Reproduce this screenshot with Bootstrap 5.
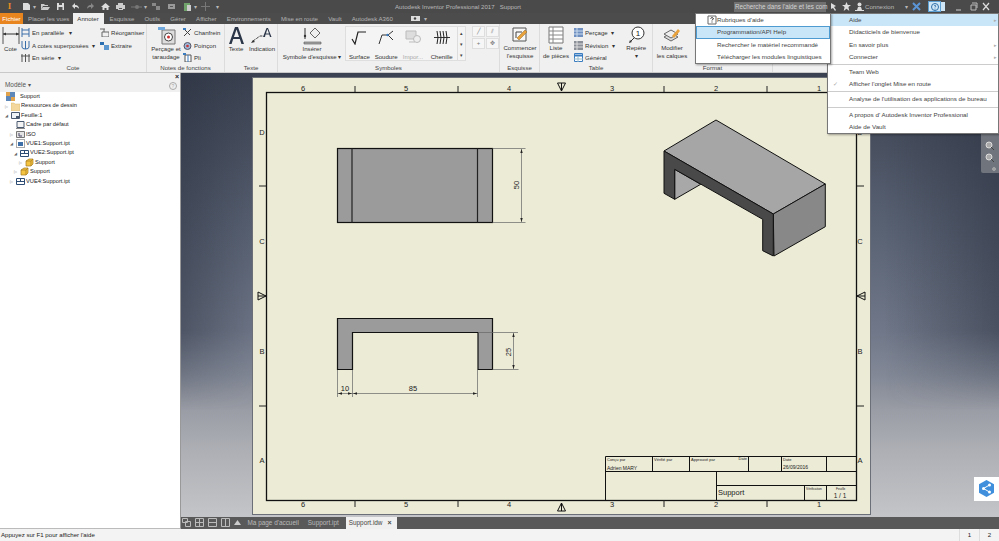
<!DOCTYPE html>
<html lang="fr">
<head>
<meta charset="UTF-8" />
<title>Autodesk Inventor Professional 2017 - Support</title>
<link href="https://cdn.jsdelivr.net/npm/bootstrap@5.3.2/dist/css/bootstrap.min.css" rel="stylesheet">
<style>
html,body{margin:0;height:541px;overflow:hidden;background:#4a4a4a}
body,.inv-app{font-family:"Liberation Sans",Arial,sans-serif;font-size:6.1px;line-height:1.2;color:#333}
.inv-app{width:999px;height:541px;overflow:hidden;position:relative}
svg{display:block;flex:none}
/* title + tabs */
.title-bar{height:13px;background:#4a4a4a;color:#b9b9b9}
.qat{width:395px;padding-left:4px}
.logo-i{width:11px;height:12px;color:#e98b24;font:bold 9px/10px "Liberation Serif",serif;text-align:center;margin-right:7px}
.qat svg{margin-right:2px}
.search-box{width:92px;height:10px;background:#707070;color:#d4d4d4;line-height:10px;padding-left:1px;white-space:nowrap;font-size:6.300px}
.right-tools{width:265px}
.conn-label{margin-left:1px;margin-right:11px}
.help-btn{width:13px;height:11px;background:#cfe6f7;border:1px solid #5d9fd0;margin-left:7px;margin-right:14px;box-shadow:5px 0 0 -1px #cfe6f7}
.tab-bar{height:11px;background:#4c4c4c;color:#b4b4b4;line-height:11px}
.tab-file{width:23px;background:#e9851f;color:#fff;text-align:center}
.tab-item{padding:0 5.100px;white-space:nowrap}
.tab-tight{margin-right:-3px}
.tab-on{background:#f0f0f0;color:#333;padding:0;margin:0 1px;width:31px;text-align:center}
/* ribbon */
.ribbon{height:49px;background:#f0f0f0;border-bottom:1px solid #c9c9c9}
.rib-group{border-right:1px solid #dcdcdc;height:48px}
.rib-body{height:39px;padding-top:2px}
.rib-label{height:9px;line-height:9px;text-align:center;color:#444}
.w-cote{width:147px}.w-notes{width:78px}.w-texte{width:53px}.w-symb{width:222px}.w-esq{width:40px}.w-table{width:113px}.w-format{width:120px}
.big-btn{text-align:center;line-height:8.400px;white-space:nowrap}
.big-btn svg{margin:0 auto}
.bw-cote{width:21px}.bw-perc{width:34px;margin-left:2px}.bw-txt{width:23px}.bw-ind{width:31px}.bw-ins{width:60px;margin-left:4px}.bw-com{width:40px}.bw-lst{width:28px;margin-left:2px}.bw-rep{width:31px;margin-left:6px}.bw-mod{width:34px;margin-left:2px}
.small-col{margin-top:2px;gap:3.600px;white-space:nowrap}
.small-row{height:9px;line-height:9px;gap:2px}
.col-a{width:79px}
.col-c{width:44px}
.gallery{width:121px;height:35px;margin-left:3px;border:1px solid #dedede;background:#f4f4f4}
.gal-btn{width:27px;text-align:center;line-height:8px;padding-top:3px;white-space:nowrap}
.gal-btn svg{margin:0 auto 8px}
.gal-last{width:31px}
.gal-off{color:#a9a9a9}
.gal-scroll{width:8px;border-left:1px solid #ddd;color:#444;font-size:5px;text-align:center;justify-content:space-around}
.mini-grid{display:grid;grid-template-columns:13px 13px;gap:1px;margin-left:6px;align-content:start}
.mini-grid span{height:11px;border:1px solid #dedede;background:#f6f6f6;color:#777;font-size:6px;line-height:9px;text-align:center}
/* main */
.model-pane{width:181px;background:#fff;border-right:1px solid #999;border-bottom:1px solid #bbb}
.model-head{height:19px;background:#f0f0f0;color:#555;position:relative;padding:8px 0 0 5px;font-size:6.400px}
.close-x{position:absolute;right:1px;top:0;font-size:7px;font-weight:bold;line-height:8px;color:#222}
.help-dot{position:absolute;right:3px;top:9px;width:8px;height:8px;border:1px solid #aaa;border-radius:50%;font-size:5px;line-height:6px;text-align:center;color:#aaa}
.tree-row{height:9.400px;line-height:9.400px;white-space:nowrap;color:#222;font-size:5.700px}
.t5{padding-left:5px}.t6{padding-left:6px}.t10{padding-left:10px}.t14{padding-left:14px}.t19{padding-left:19px}
.t-arrow{width:6px;font-size:4px;color:#666;flex:none;line-height:9px}
.tree-row svg{margin-right:1px}
.canvas-wrap{width:818px}
.canvas-area{height:444px;padding:4px 0 0 71px;position:relative;background:linear-gradient(180deg,#3a4150 0,#596273 35%,#6f7788 58%,#828896 68%,#9a9da5 76%,#adafb5 85%,#c4c5c8 100%)}
.canvas-area::before{content:"";position:absolute;inset:0;background:linear-gradient(90deg,rgba(38,44,58,.45) 0,rgba(38,44,58,0) 10%,rgba(38,44,58,0) 86%,rgba(38,44,58,.5) 100%);-webkit-mask-image:linear-gradient(180deg,#000 0,#000 58%,transparent 76%);mask-image:linear-gradient(180deg,#000 0,#000 58%,transparent 76%)}
.sheet-svg{position:relative}
.sheet-svg text{font-family:"Liberation Sans",Arial,sans-serif;fill:#222}
.nav-strip{position:absolute;right:0;top:40px;width:18px;height:60px;background:#70747c;border-radius:2px 0 0 2px}
.nav-strip svg{position:absolute;left:4px}
.nav-a{top:28px}.nav-b{top:40px}.nav-c{top:54px;left:11px!important}
.share-box{position:absolute;right:0;top:404px;width:25px;height:24px;background:#fff;padding:3px 5px}
.doc-tabs{height:12px;background:#595959;color:#b9b9b9;line-height:12px;font-size:6.400px}
.view-btns{gap:4px;padding:1px 0 0 1px;width:62px}
.doc-tab{padding:0 4.500px;white-space:nowrap}
.doc-on{background:#f0f0f0;color:#444;padding:0 3px;margin-left:2.500px;width:51px}
.doc-on b{margin-left:5px;font-size:7px}
.status-line{height:12px;background:#f3f3f3;line-height:12px;color:#222;padding-left:1px}
.status-cell{width:20px;text-align:center;border-left:1px solid #ddd;height:12px}
/* menus */
.dropdown-menu.help-menu{position:absolute;display:block;min-width:0;padding:0;margin:0;border-radius:0;border:1px solid #777;background:#fff;font-size:6.250px;box-shadow:1px 1px 2px rgba(0,0,0,.35)}
.menu-left{left:695px;top:13px;width:136px;z-index:20}
.menu-right{left:827px;top:13px;width:172px;z-index:19}
.help-menu .dropdown-item{height:12.300px;line-height:12px;padding:0 0 0 21px;color:#444;display:flex;align-items:center;position:relative;white-space:nowrap}
.help-menu .item-hot{background:#c9e6f8;box-shadow:inset 0 0 0 1px #4d9bd1}
.menu-right .item-hot{box-shadow:none}
.help-menu .dropdown-divider{margin:.9px 0;border-color:#ccc;opacity:1}
.sub-arrow{position:absolute;right:1px;color:#aaa;font-size:5px}
.item-check{position:absolute;left:5px;color:#aaa}
.menu-ico{position:absolute;left:11px;top:1px}
</style>
</head>
<body>
<div class="inv-app d-flex flex-column">

<div class="title-bar d-flex align-items-center">
  <div class="qat d-flex align-items-center">
    <div class="logo-i">I</div>
    <svg width="9" height="9" viewBox="0 0 9 9"><path d="M1 1h5l2 2v5H1z" fill="#ddd"/></svg><span class="me-1">▾</span>
    <svg width="10" height="9" viewBox="0 0 10 9"><path d="M1 2h3l1 1h3v1H3L1 8zM3 5h7L8 8H1z" fill="#ccc"/></svg>
    <svg class="ms-1" width="9" height="9" viewBox="0 0 9 9"><path d="M1 1h7v7H1z" fill="#ddd"/><path d="M3 1h3v2H3zM2.500 5h4v3h-4z" fill="#555"/></svg>
    <svg class="ms-1" width="9" height="9" viewBox="0 0 9 9"><path d="M1 4l3-3v2c3 0 4 2 4 4-1-1.500-2-2-4-2v2z" fill="#ddd"/></svg>
    <svg class="ms-1" width="9" height="9" viewBox="0 0 9 9"><path d="M8 4L5 1v2C2 3 1 5 1 7c1-1.500 2-2 4-2v2z" fill="#888"/></svg>
    <svg class="ms-1" width="9" height="9" viewBox="0 0 9 9"><path d="M4.500 1L0 5h1.500v3h2V6h2v2h2V5H9z" fill="#ddd"/></svg>
    <svg class="ms-1" width="9" height="9" viewBox="0 0 9 9"><path d="M2 1h5v2h2v4H7v1H2V7H0V3h2z" fill="#ccc"/><path d="M3 6h3v1H3z" fill="#555"/></svg>
    <svg class="ms-1" width="11" height="9" viewBox="0 0 11 9"><circle cx="6" cy="5" r="2" fill="#777"/><path d="M0 5h11" stroke="#777"/></svg><span class="me-1">▾</span>
    <svg width="10" height="9" viewBox="0 0 10 9"><path d="M1 1h4v3H1zM5 4h4v4H5z" fill="#888"/></svg>
    <svg class="ms-1" width="10" height="9" viewBox="0 0 10 9"><path d="M1 2h7v5H1z" fill="#999"/><path d="M3 4h3v1H3z" fill="#555"/></svg>
    <svg class="ms-1" width="9" height="10" viewBox="0 0 9 10"><path d="M1 1h6v8H1z" fill="#6fa36b"/><path d="M4 3h4v6H4z" fill="#ccc"/></svg><span class="me-1">▾</span>
    <svg width="9" height="9" viewBox="0 0 9 9"><path d="M4.500 0v9M0 4.500h9" stroke="#777"/></svg>
    <span class="ms-1">▾</span>
  </div>
  <div>Autodesk Inventor Professional 2017 &nbsp;&nbsp;Support</div>
  <div class="right-tools ms-auto d-flex align-items-center">
    <div class="search-box">Recherche dans l'aide et les com</div>
    <svg class="ms-1" width="8" height="9" viewBox="0 0 8 9"><path d="M1 1l5 3-2 1 2 3-1 1-2-3-2 1z" fill="#ddd"/></svg>
    <svg class="ms-1" width="9" height="9" viewBox="0 0 9 9"><path d="M4.500 0l1.300 3H9L6.400 5.100 7.300 9 4.500 6.800 1.700 9l.9-3.900L0 3h3.200z" fill="#ddd"/></svg>
    <svg class="ms-1" width="9" height="9" viewBox="0 0 9 9"><circle cx="4.500" cy="2.500" r="2" fill="#ddd"/><path d="M2 8l1-3h3l1 3zM0 8h9v1H0z" fill="#ddd"/></svg>
    <span class="conn-label">Connexion</span>
    <span>▾</span>
    <svg class="ms-1" width="9" height="9" viewBox="0 0 9 9"><path d="M1 1l7 7M8 1L1 8" stroke="#5b95d6" stroke-width="2"/></svg>
    <span class="help-btn d-flex align-items-center justify-content-center"><svg width="8" height="8" viewBox="0 0 8 8"><circle cx="4" cy="4" r="3.500" fill="none" stroke="#2d6ea8"/><path d="M3 3q1-1.500 2 0L4 4.500M4 5.500v1" stroke="#2d6ea8" fill="none" stroke-width=".8"/></svg></span>
    <svg width="7" height="9" viewBox="0 0 7 9"><path d="M1 8h5" stroke="#ccc"/></svg>
    <svg class="ms-2" width="8" height="9" viewBox="0 0 8 9"><path d="M1 3h5v5H1zM2 1h5v5" fill="none" stroke="#bbb"/></svg>
    <svg class="ms-1" width="8" height="9" viewBox="0 0 8 9"><path d="M1 1l6 7M7 1L1 8" stroke="#ddd" stroke-width="1.200"/></svg>
  </div>
</div>

<div class="tab-bar d-flex">
  <div class="tab-file">Fichier</div>
  <div class="tab-item tab-tight">Placer les vues</div>
  <div class="tab-item tab-on">Annoter</div>
  <div class="tab-item">Esquisse</div>
  <div class="tab-item">Outils</div>
  <div class="tab-item">Gérer</div>
  <div class="tab-item">Afficher</div>
  <div class="tab-item">Environnements</div>
  <div class="tab-item">Mise en route</div>
  <div class="tab-item">Vault</div>
  <div class="tab-item">Autodesk A360</div>
  <div class="tab-item ms-2 d-flex align-items-center"><svg width="9" height="7" viewBox="0 0 9 7"><path d="M0 1h9v5H0z" fill="#ddd"/><circle cx="4" cy="3.500" r="1.200" fill="#444"/></svg><span class="ms-1">▾</span></div>
</div>

<div class="ribbon d-flex">
  <div class="rib-group w-cote d-flex flex-column">
    <div class="rib-body d-flex">
      <div class="big-btn bw-cote">
        <svg width="18" height="19" viewBox="0 0 18 19"><path d="M1 1v17M17 1v17" stroke="#555"/><path d="M1 8h16" stroke="#333"/><path d="M1 8l3-1.500v3zM17 8l-3-1.500v3z" fill="#333"/></svg>
        Cote
      </div>
      <div class="small-col col-a d-flex flex-column">
        <div class="small-row d-flex"><svg width="9" height="9" viewBox="0 0 9 9"><path d="M1 0v9M8 0v9M1 2h7M1 6h7" stroke="#3a6ea8" fill="none"/></svg><span>En parallèle &nbsp;&nbsp;▾</span></div>
        <div class="small-row d-flex"><svg width="9" height="9" viewBox="0 0 9 9"><path d="M1 0v6q0 2 3.500 2T8 6V0M4.500 0v8" stroke="#3a6ea8" fill="none"/></svg><span>A cotes superposées &nbsp;▾</span></div>
        <div class="small-row d-flex"><svg width="9" height="9" viewBox="0 0 9 9"><path d="M1 1v8M4.500 1v8M8 1v8M0 3h9" stroke="#555" fill="none"/></svg><span>En série &nbsp;▾</span></div>
      </div>
      <div class="small-col col-c d-flex flex-column">
        <div class="small-row d-flex"><svg width="9" height="9" viewBox="0 0 9 9"><path d="M0 1h5M4 1v3M2 4h7v5H2z" stroke="#666" fill="none"/></svg><span>Réorganiser</span></div>
        <div class="small-row d-flex"><svg width="9" height="9" viewBox="0 0 9 9"><path d="M0 1h4v3H0z" fill="#2c6fb0"/><path d="M4 4h5v5H4z" fill="#5d97d0"/></svg><span>Extraire</span></div>
      </div>
    </div>
    <div class="rib-label">Cote</div>
  </div>

  <div class="rib-group w-notes d-flex flex-column">
    <div class="rib-body d-flex">
      <div class="big-btn bw-perc">
        <svg width="19" height="19" viewBox="0 0 19 19"><path d="M5 4h13v14H5z" fill="#ddd" stroke="#777"/><circle cx="11.500" cy="11" r="4" fill="#fff" stroke="#444"/><circle cx="11.500" cy="11" r="1.500" fill="#c33"/><path d="M1 1h7v3H1z" fill="#6fa8dc"/></svg>
        Perçage et<br>taraudage
      </div>
      <div class="small-col d-flex flex-column">
        <div class="small-row d-flex"><svg width="9" height="9" viewBox="0 0 9 9"><path d="M1 1l3 3M1 8l7-7M4 4l3 3" stroke="#444" fill="none"/><path d="M0 0h3v2H0z" fill="#3a7cc0"/></svg><span>Chanfrein</span></div>
        <div class="small-row d-flex"><svg width="9" height="9" viewBox="0 0 9 9"><circle cx="4.500" cy="5" r="3.500" fill="#9db8d8" stroke="#556"/><circle cx="4.500" cy="5" r="1.300" fill="#c33"/></svg><span>Poinçon</span></div>
        <div class="small-row d-flex"><svg width="9" height="9" viewBox="0 0 9 9"><path d="M2 2h6v7H2z" fill="#fff" stroke="#555"/><path d="M5 2v7" stroke="#3a7cc0"/><path d="M0 0h3v2H0z" fill="#3a7cc0"/></svg><span>Pli</span></div>
      </div>
    </div>
    <div class="rib-label">Notes de fonctions</div>
  </div>

  <div class="rib-group w-texte d-flex flex-column">
    <div class="rib-body d-flex">
      <div class="big-btn bw-txt">
        <svg width="17" height="19" viewBox="0 0 17 19"><path d="M1 18L7 1h3l6 17h-2.600l-1.600-5H5.200l-1.600 5zM5.900 11h5.200L8.500 3.500z" fill="#2b3648"/></svg>
        Texte
      </div>
      <div class="big-btn bw-ind">
        <svg width="24" height="19" viewBox="0 0 24 19"><path d="M3 15l7-5h3" stroke="#444" fill="none" stroke-dasharray="3 1"/><path d="M1 17l4-1-2-2z" fill="#333"/><path d="M13 11l3.500-9h1.500l3.500 9h-1.500l-.8-2.500h-3.700L15 11zM16 7.500h3L17.300 3z" fill="#2b3648"/></svg>
        Indication
      </div>
    </div>
    <div class="rib-label">Texte</div>
  </div>

  <div class="rib-group w-symb d-flex flex-column">
    <div class="rib-body d-flex">
      <div class="big-btn bw-ins">
        <svg width="20" height="19" viewBox="0 0 20 19"><path d="M2 16h17v2H2z" fill="#aaa" stroke="#555" stroke-width=".6"/><path d="M3 2v11" stroke="#333"/><circle cx="3" cy="10" r="1.200" fill="#333"/><path d="M13 2l5 5-5 5-5-5z" fill="#eee" stroke="#666"/></svg>
        Insérer<br>Symbole d'esquisse ▾
      </div>
      <div class="gallery d-flex">
        <div class="gal-btn"><svg width="16" height="15" viewBox="0 0 16 15"><path d="M1 9l3 5 3-12h8" fill="none" stroke="#222" stroke-width="1.200"/></svg>Surface</div>
        <div class="gal-btn"><svg width="16" height="15" viewBox="0 0 16 15"><path d="M1 14l3-9h6l5-4M10 5l5 5" fill="none" stroke="#333"/><circle cx="9.500" cy="5" r="1.200" fill="#3a7cc0"/></svg>Soudure</div>
        <div class="gal-btn gal-off"><svg width="16" height="15" viewBox="0 0 16 15"><path d="M1 1h10v8H1zM4 12h6" fill="#ddd" stroke="#bbb"/><circle cx="12" cy="9" r="3.500" fill="#eee" stroke="#bbb"/></svg>Impor...</div>
        <div class="gal-btn gal-last"><svg width="18" height="15" viewBox="0 0 18 15"><path d="M1 7.500h16" stroke="#333"/><path d="M4 1q2 6.500 0 13M7 1q2 6.500 0 13M10 1q2 6.500 0 13M13 1q2 6.500 0 13" fill="none" stroke="#222"/></svg>Chenille</div>
        <div class="gal-scroll ms-auto d-flex flex-column"><span>▴</span><span>▾</span><span>▾</span></div>
      </div>
      <div class="mini-grid"><span>╱</span><span>⫽</span><span>+</span><span>✥</span></div>
    </div>
    <div class="rib-label">Symboles</div>
  </div>

  <div class="rib-group w-esq d-flex flex-column">
    <div class="rib-body">
      <div class="big-btn bw-com">
        <svg width="18" height="18" viewBox="0 0 18 18"><path d="M2 2h13v13H2z" fill="#f7f7f7" stroke="#555"/><path d="M5 12V6h6" fill="none" stroke="#444"/><path d="M8 14l8-8-2-2-8 8z" fill="#e9a23b" stroke="#8a6a2a" stroke-width=".5"/></svg>
        Commencer<br>l'esquisse
      </div>
    </div>
    <div class="rib-label">Esquisse</div>
  </div>

  <div class="rib-group w-table d-flex flex-column">
    <div class="rib-body d-flex">
      <div class="big-btn bw-lst">
        <svg width="16" height="18" viewBox="0 0 16 18"><path d="M1 1h14v16H1z" fill="#fff" stroke="#777"/><path d="M1 5h14M1 9h14M1 13h14M5 1v16" stroke="#888"/></svg>
        Liste<br>de pièces
      </div>
      <div class="small-col ms-1 d-flex flex-column">
        <div class="small-row d-flex"><svg width="9" height="9" viewBox="0 0 9 9"><path d="M0 0h9v9H0z" fill="#6f8fc0"/><path d="M0 3h9M0 6h9M3 0v9" stroke="#cde"/></svg><span>Perçage &nbsp;▾</span></div>
        <div class="small-row d-flex"><svg width="9" height="9" viewBox="0 0 9 9"><path d="M0 0h9v9H0z" fill="#8a8f98"/><path d="M0 3h9M0 6h9M3 0v9" stroke="#ddd"/></svg><span>Révision &nbsp;▾</span></div>
        <div class="small-row d-flex"><svg width="9" height="9" viewBox="0 0 9 9"><path d="M.5.500h8v8h-8z" fill="#fff" stroke="#3a7cc0"/><path d="M0 2.500h9" stroke="#3a7cc0" stroke-width="2"/><path d="M0 6h9M4 3v6" stroke="#9bc"/></svg><span>Général</span></div>
      </div>
      <div class="big-btn bw-rep">
        <svg width="17" height="18" viewBox="0 0 17 18"><circle cx="10" cy="7" r="6" fill="#fff" stroke="#333"/><path d="M6 12l-4 4" stroke="#333"/><path d="M1 17l3-1-2-2z" fill="#333"/><text x="10" y="10" font-size="8" text-anchor="middle" fill="#222">1</text></svg>
        Repère<br>▾
      </div>
    </div>
    <div class="rib-label">Table</div>
  </div>

  <div class="rib-group w-format d-flex flex-column">
    <div class="rib-body">
      <div class="big-btn bw-mod">
        <svg width="18" height="18" viewBox="0 0 18 18"><path d="M1 11l7-4 7 4-7 4z" fill="#ddd" stroke="#666"/><path d="M1 8l7-4 7 4-7 4z" fill="#eee" stroke="#666"/><path d="M9 10l6-7 2 2-6 7z" fill="#e9a23b"/></svg>
        Modifier<br>les calques
      </div>
    </div>
    <div class="rib-label">Format</div>
  </div>
</div>

<div class="d-flex flex-grow-1">
  <div class="model-pane">
    <div class="model-head">Modèle ▾<span class="close-x">×</span><span class="help-dot">?</span></div>
    <div>
      <div class="tree-row d-flex align-items-center t6"><svg width="9" height="9" viewBox="0 0 9 9"><path d="M0 0h9v9H0z" fill="#5d87b8"/><path d="M0 0h4v4H0zM5 5h4v4H5z" fill="#e0a24a"/></svg><span class="ms-1">Support</span></div>
      <div class="tree-row d-flex align-items-center t5"><span class="t-arrow">▷</span><svg width="9" height="9" viewBox="0 0 9 9"><path d="M0 1h3l1 1h5v7H0z" fill="#f3d79c" stroke="#d6b876" stroke-width=".5"/></svg><span>Ressources de dessin</span></div>
      <div class="tree-row d-flex align-items-center t5"><span class="t-arrow">◢</span><svg width="9" height="9" viewBox="0 0 9 9"><path d="M.5 1.500h8v6h-8z" fill="#eef3f8" stroke="#4a5a70"/><path d="M5 5h3v2H5z" fill="#4a5a70"/></svg><span>Feuille:1</span></div>
      <div class="tree-row d-flex align-items-center t10"><span class="t-arrow"></span><svg width="9" height="9" viewBox="0 0 9 9"><path d="M1 1.500h7v6H1z" fill="#f4f4f4" stroke="#4a5a70"/><path d="M0 8.500h9" stroke="#888"/></svg><span>Cadre par défaut</span></div>
      <div class="tree-row d-flex align-items-center t10"><span class="t-arrow">▷</span><svg width="9" height="9" viewBox="0 0 9 9"><path d="M.5 1.500h8v6h-8z" fill="#e4e4e4" stroke="#777"/><path d="M3 3v3h3" stroke="#446" fill="none"/></svg><span>ISO</span></div>
      <div class="tree-row d-flex align-items-center t10"><span class="t-arrow">◢</span><svg width="9" height="9" viewBox="0 0 9 9"><path d="M.5.500h8v8h-8z" fill="#fff" stroke="#555" stroke-dasharray="1 1"/><path d="M2 3h5v4H2z" fill="#3d6ea5"/></svg><span>VUE1:Support.ipt</span></div>
      <div class="tree-row d-flex align-items-center t14"><span class="t-arrow">◢</span><svg width="9" height="9" viewBox="0 0 9 9"><path d="M.5 1.500h8v6h-8z" fill="#fff" stroke="#2e4d75"/><path d="M.5 4.500h8M4.500 1.500v3" stroke="#2e4d75"/></svg><span>VUE2:Support.ipt</span></div>
      <div class="tree-row d-flex align-items-center t19"><span class="t-arrow">▷</span><svg width="9" height="9" viewBox="0 0 9 9"><path d="M1 3l3-2h4v5L6 8H1z" fill="#f5c542" stroke="#a5791d" stroke-width=".7"/><path d="M1 3h5v5M6 3l2-2" fill="none" stroke="#a5791d" stroke-width=".7"/></svg><span>Support</span></div>
      <div class="tree-row d-flex align-items-center t14"><span class="t-arrow">▷</span><svg width="9" height="9" viewBox="0 0 9 9"><path d="M1 3l3-2h4v5L6 8H1z" fill="#f5c542" stroke="#a5791d" stroke-width=".7"/><path d="M1 3h5v5M6 3l2-2" fill="none" stroke="#a5791d" stroke-width=".7"/></svg><span>Support</span></div>
      <div class="tree-row d-flex align-items-center t10"><span class="t-arrow">▷</span><svg width="9" height="9" viewBox="0 0 9 9"><path d="M.5 1.500h8v6h-8z" fill="#fff" stroke="#2e4d75"/><path d="M.5 4.500h8M4.500 1.500v3" stroke="#2e4d75"/></svg><span>VUE4:Support.ipt</span></div>
    </div>
  </div>

  <div class="canvas-wrap d-flex flex-column">
    <div class="canvas-area">
      <svg class="sheet-svg" width="619" height="438" viewBox="252 77 619 438">
        <rect x="252.500" y="77.500" width="618" height="437" fill="#ecebd6" stroke="#6b6f78"/>
        <rect x="266.500" y="92.500" width="590" height="408" fill="none" stroke="#111" stroke-width="1.300"/>
        <g stroke="#222" stroke-width="1">
          <path d="M355 86v6M458 86v6M664 86v6M767 86v6M355 500v7M458 500v7M664 500v7M767 500v7"/>
          <path d="M259 186h7M259 406h7M857 186h7M857 406h7"/>
        </g>
        <g fill="none" stroke="#111">
          <path d="M557.500 83h8l-4 8zM561.500 91v-8M557.500 511h8l-4-8zM561.500 503v8M258 292v8l8-4zM258 296h8M865 292v8l-8-4zM865 296h-8"/>
        </g>
        <g font-size="7.500" text-anchor="middle">
          <text x="303" y="91">6</text><text x="406" y="91">5</text><text x="509" y="91">4</text><text x="612" y="91">3</text><text x="716" y="91">2</text><text x="819" y="91">1</text>
          <text x="303" y="507">6</text><text x="406" y="507">5</text><text x="509" y="507">4</text><text x="612" y="507">3</text><text x="716" y="507">2</text><text x="819" y="507">1</text>
          <text x="262" y="135">D</text><text x="262" y="244">C</text><text x="262" y="354">B</text><text x="262" y="463">A</text>
          <text x="860" y="135">D</text><text x="860" y="244">C</text><text x="860" y="354">B</text><text x="860" y="463">A</text>
        </g>

        <rect x="337.500" y="148.500" width="155" height="74" fill="#9b9b9b" stroke="#111" stroke-width="1.200"/>
        <path d="M352 148.500v74M477.500 148.500v74" stroke="#222" stroke-width="1.200"/>
        <g stroke="#666" stroke-width=".7" fill="none"><path d="M492.500 148.500h33M492.500 222.500h33M521.500 149v73"/></g>
        <path d="M521.500 149l-1.200 4h2.400zM521.500 222l-1.200-4h2.400z" fill="#222"/>
        <text x="519" y="185" font-size="7.500" text-anchor="middle" transform="rotate(-90 519 185)">50</text>

        <path d="M337.500 318.500h155v51h-14.500v-37h-125.500v37h-15z" fill="#9b9b9b" stroke="#111" stroke-width="1.200"/>
        <g stroke="#666" stroke-width=".7" fill="none"><path d="M478 332.500h40M492.500 369.500h26M513.500 333v36M337.500 370v27M352.500 370v27M477.500 370v27M337.500 393.500h140"/></g>
        <path d="M513.500 333l-1.200 4h2.400zM513.500 369l-1.200-4h2.400zM338 393.500l4-1.200v2.400zM352 393.500l-4-1.200v2.400zM353 393.500l4-1.200v2.400zM477 393.500l-4-1.200v2.400z" fill="#222"/>
        <text x="511" y="352" font-size="7.500" text-anchor="middle" transform="rotate(-90 511 352)">25</text>
        <text x="345" y="391" font-size="7.500" text-anchor="middle">10</text>
        <text x="413" y="391" font-size="7.500" text-anchor="middle">85</text>

        <g stroke="#111" stroke-width="1" stroke-linejoin="round">
          <path d="M664 151L716 120 825.300 184 773.300 214z" fill="#a6a6a6"/>
          <path d="M773.300 214L825.300 184v42.700L774 256z" fill="#888"/>
          <path d="M674.700 169.300l26 15-26 15z" fill="#a8a8a8"/>
          <path d="M664 151L773.300 214V256L762.700 250.700V219.300L674.700 169.300V199.300L664 193.300z" fill="#494949"/>
        </g>

        <g fill="none" stroke="#111" stroke-width="1">
          <path d="M605.500 456.500H856.500M605.500 471.500H856.500M605.500 456.500V500M652.500 456.500V471M689.500 456.500V471M748.500 456.500V471M781.500 456.500V471M826.500 456.500V471M716.500 471V500M716.500 485.500H856.500M804.500 485.500V500M826.500 485.500V500"/>
        </g>
        <g font-size="4">
          <text x="607" y="460.500">Conçu par</text><text x="654" y="460.500">Vérifié par</text><text x="691" y="460.500">Approuvé par</text><text x="747" y="459.500" text-anchor="end">Date</text><text x="783" y="460.500">Date</text>
          <text x="806" y="489.500" font-size="3.200">Vérification</text><text x="836" y="489.500" font-size="3.200">Feuille</text>
        </g>
        <text x="607" y="469.500" font-size="5">Adrien MARY</text>
        <text x="783" y="469" font-size="5">26/09/2016</text>
        <text x="718" y="495" font-size="7.500">Support</text>
        <text x="840" y="497.500" font-size="6.500" text-anchor="middle">1 / 1</text>
      </svg>

      <div class="nav-strip">
        <svg class="nav-a" width="9" height="9" viewBox="0 0 9 9"><circle cx="4" cy="4" r="3" fill="#aaa" stroke="#ddd"/><path d="M6 6l3 3" stroke="#444"/></svg>
        <svg class="nav-b" width="9" height="9" viewBox="0 0 9 9"><circle cx="4" cy="4" r="3" fill="#aaa" stroke="#ddd"/><path d="M6 6l3 3" stroke="#444"/></svg>
        <svg class="nav-c" width="4" height="4" viewBox="0 0 4 4"><circle cx="2" cy="2" r="1.500" fill="#999" stroke="#ccc" stroke-width=".5"/></svg>
      </div>
      <div class="share-box">
        <svg width="15" height="17" viewBox="0 0 15 17"><path d="M7.500 0L15 4.200v8.600L7.500 17 0 12.800V4.200z" fill="#3f8fdc"/><path d="M10.500 5L4.500 8.500l6 3.500" stroke="#fff" fill="none"/><circle cx="10.500" cy="5" r="1.500" fill="#fff"/><circle cx="4.500" cy="8.500" r="1.500" fill="#fff"/><circle cx="10.500" cy="12" r="1.500" fill="#fff"/></svg>
      </div>
    </div>
    <div class="doc-tabs d-flex">
      <div class="view-btns d-flex">
        <svg width="9" height="9" viewBox="0 0 9 9"><path d="M.5.500h5v4h-5zM3.500 3.500h5v5h-5z" fill="none" stroke="#bbb"/></svg>
        <svg width="9" height="9" viewBox="0 0 9 9"><path d="M.5.500h8v8h-8zM.5 4.500h8M4.500.500v8" fill="none" stroke="#bbb"/></svg>
        <svg width="9" height="9" viewBox="0 0 9 9"><path d="M.5.500h8v8h-8zM.5 4.500h8" fill="none" stroke="#bbb"/></svg>
        <svg width="9" height="9" viewBox="0 0 9 9"><path d="M.5.500h8v8h-8zM4.500.500v8" fill="none" stroke="#bbb"/></svg>
        <svg width="7" height="9" viewBox="0 0 7 9"><path d="M3.500 2L7 7H0z" fill="#ccc"/></svg>
      </div>
      <div class="doc-tab">Ma page d'accueil</div>
      <div class="doc-tab">Support.ipt</div>
      <div class="doc-tab doc-on">Support.idw<b>×</b></div>
    </div>
  </div>
</div>

<div class="status-line d-flex">
  <div class="me-auto">Appuyez sur F1 pour afficher l'aide</div>
  <div class="status-cell">1</div>
  <div class="status-cell">2</div>
</div>

<div class="dropdown-menu help-menu menu-left show">
  <a class="dropdown-item" href="#"><svg class="menu-ico" width="10" height="10" viewBox="0 0 10 10"><path d="M1 1h8v8H1z" fill="#fff" stroke="#666"/><path d="M3.500 3.500q1.500-2 3 0L5 5.500M5 6.500v1" stroke="#333" fill="none"/></svg>Rubriques d'aide</a>
  <a class="dropdown-item item-hot" href="#">Programmation/API Help</a>
  <a class="dropdown-item" href="#">Rechercher le matériel recommandé</a>
  <a class="dropdown-item" href="#">Télécharger les modules linguistiques</a>
</div>
<div class="dropdown-menu help-menu menu-right show">
  <a class="dropdown-item item-hot" href="#">Aide<span class="sub-arrow">▸</span></a>
  <a class="dropdown-item" href="#">Didacticiels de bienvenue</a>
  <a class="dropdown-item" href="#">En savoir plus<span class="sub-arrow">▸</span></a>
  <a class="dropdown-item" href="#">Connecter<span class="sub-arrow">▸</span></a>
  <hr class="dropdown-divider">
  <a class="dropdown-item" href="#">Team Web</a>
  <a class="dropdown-item" href="#"><span class="item-check">✓</span>Afficher l'onglet Mise en route</a>
  <hr class="dropdown-divider">
  <a class="dropdown-item" href="#">Analyse de l'utilisation des applications de bureau</a>
  <hr class="dropdown-divider">
  <a class="dropdown-item" href="#">A propos d' Autodesk Inventor Professional</a>
  <a class="dropdown-item" href="#">Aide de Vault</a>
</div>

</div>
<script src="https://cdn.jsdelivr.net/npm/bootstrap@5.3.2/dist/js/bootstrap.bundle.min.js"></script>
</body>
</html>
